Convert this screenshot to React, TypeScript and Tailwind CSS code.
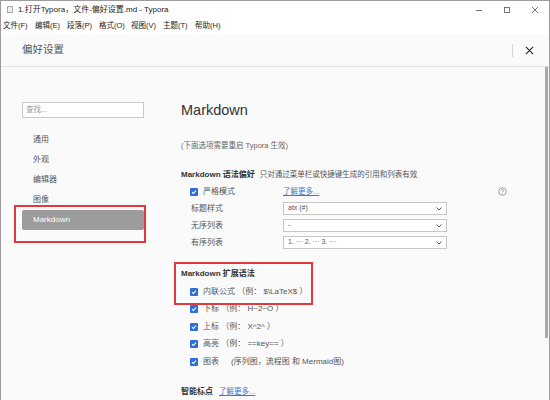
import { ReactNode } from "react";

const font = {
  fontFamily: '"Liberation Sans", "Noto Sans CJK SC", sans-serif',
};

const menus = ["文件(F)", "编辑(E)", "段落(P)", "格式(O)", "视图(V)", "主题(T)", "帮助(H)"];
const sideItems = ["通用", "外观", "编辑器", "图像"];

export default function App() {
  return (
    <div
      style={font}
      className="relative flex flex-col w-[550px] h-[400px] overflow-hidden bg-[#fafafa] border-t border-l border-r border-[#9c9c9c]"
    >
      <TitleBar />
      <div className="flex items-center h-[16px] bg-white pl-[2px] text-[7.5px] text-[#222]">
        {menus.map((m) => (
          <span key={m} className="w-[32px] shrink-0 whitespace-nowrap">
            {m}
          </span>
        ))}
      </div>

      <div className="flex items-center h-[33px] border-b border-[#e2e2e2] pl-[21px] pr-[15px]">
        <span className="text-[10.5px] text-[#555]">偏好设置</span>
        <div className="ml-auto flex items-center gap-[12px]">
          <span className="w-px h-[13px] bg-[#d4d4d4]" />
          <svg width="9" height="9" viewBox="0 0 10 10">
            <path d="M1 1L9 9M9 1L1 9" stroke="#333" strokeWidth="1.4" />
          </svg>
        </div>
      </div>

      <div className="flex flex-1">
        <Sidebar />
        <Main />
        <div className="w-[3px] mr-px">
          <div className="h-[271px] bg-[#a9a9a9]" />
        </div>
      </div>

      <div className="absolute left-[13px] top-[204px] w-[132px] h-[38px] border-2 border-[#e3393d]" />
      <div className="absolute left-[173px] top-[261px] w-[139px] h-[43px] border-2 border-[#e3393d]" />
    </div>
  );
}

function TitleBar() {
  return (
    <div className="flex items-center h-[17px] bg-white text-[8px] text-[#222]">
      <span className="ml-[6px] w-[6px] h-[7px] border border-[#aaa] bg-[#eee]" />
      <span className="ml-[5px]">1.打开Typora，文件-偏好设置.md - Typora</span>
      <div className="ml-auto flex items-center gap-[22px] mr-[11px]">
        <svg width="6" height="6" viewBox="0 0 6 6">
          <path d="M0 3.5H6" stroke="#555" strokeWidth="0.8" />
        </svg>
        <svg width="6" height="6" viewBox="0 0 6 6">
          <rect x="0.5" y="0.5" width="5" height="5" fill="none" stroke="#555" strokeWidth="0.8" />
        </svg>
        <svg width="6" height="6" viewBox="0 0 6 6">
          <path d="M0 0L6 6M6 0L0 6" stroke="#555" strokeWidth="0.8" />
        </svg>
      </div>
    </div>
  );
}

function Sidebar() {
  return (
    <div className="w-[180px] pl-[21px] pt-[35px]">
      <div className="flex items-center w-[122px] h-[16px] border border-[#c9c9c9] bg-white pl-[3px] text-[7.5px] text-[#999]">
        查找...
      </div>
      <div className="mt-[12px] w-[122px] text-[8px] text-[#555]">
        {sideItems.map((s) => (
          <div key={s} className="flex items-center h-[20px] pl-[11px]">
            {s}
          </div>
        ))}
        <div className="flex items-center h-[20px] pl-[11px] rounded-[2px] bg-[#9c9c9c] text-white">
          Markdown
        </div>
      </div>
    </div>
  );
}

function Check({ children }: { children: ReactNode }) {
  return (
    <div className="flex items-center h-[17.5px] pl-[9px] text-[8px] text-[#555]">
      <CheckBox />
      <span className="ml-[5px]">{children}</span>
    </div>
  );
}

function CheckBox() {
  return (
    <span className="flex items-center justify-center w-[8px] h-[8px] rounded-[1px] bg-[#2c6fdb]">
      <svg width="6" height="6" viewBox="0 0 6 6">
        <path d="M1 3.1L2.4 4.5L5 1.6" fill="none" stroke="white" strokeWidth="1.1" />
      </svg>
    </span>
  );
}

function SelectRow({ label, value }: { label: string; value: string }) {
  return (
    <div className="flex items-center h-[17px] pl-[10px] text-[8px] text-[#555]">
      <span className="w-[92px]">{label}</span>
      <div className="flex items-center w-[164px] h-[13px] border border-[#c6c6c6] bg-white pl-[4px] pr-[4px] text-[7px] text-[#555]">
        <span>{value}</span>
        <svg className="ml-auto" width="6" height="4" viewBox="0 0 6 4">
          <path d="M0.5 0.5L3 3L5.5 0.5" fill="none" stroke="#444" strokeWidth="0.9" />
        </svg>
      </div>
    </div>
  );
}

function Main() {
  return (
    <div className="flex-1 flex flex-col pr-[38px]">
      <div className="mt-[33px] h-[20px] leading-[20px] text-[14.5px] text-[#333]">Markdown</div>
      <div className="mt-[20px] h-[12px] leading-[12px] text-[7.5px] text-[#666]">
        (下面选项需要重启 Typora 生效)
      </div>

      <div className="mt-[17px] flex items-center h-[12px]">
        <span className="text-[8px] font-bold text-[#333]">Markdown 语法偏好</span>
        <span className="ml-[5px] text-[7.5px] text-[#555]">只对通过菜单栏或快捷键生成的引用和列表有效</span>
      </div>

      <div className="mt-[2px] flex items-center h-[17px] pl-[9px] text-[8px] text-[#555]">
        <CheckBox />
        <span className="ml-[5px] w-[80px]">严格模式</span>
        <span className="text-[7.5px] text-[#3f78c8] underline">了解更多...</span>
        <svg className="ml-auto" width="9" height="9" viewBox="0 0 10 10">
          <circle cx="5" cy="5" r="4.2" fill="none" stroke="#888" strokeWidth="0.9" />
          <path d="M3.7 4C3.7 3.2 4.3 2.8 5 2.8C5.8 2.8 6.3 3.3 6.3 3.9C6.3 4.8 5.1 4.8 5.1 5.8" fill="none" stroke="#888" strokeWidth="0.9" />
          <circle cx="5.1" cy="7.2" r="0.5" fill="#888" />
        </svg>
      </div>

      <SelectRow label="标题样式" value="atx (#)" />
      <SelectRow label="无序列表" value="-" />
      <SelectRow label="有序列表" value="1. ··· 2. ··· 3. ···" />

      <div className="mt-[17px] h-[12px] flex items-center text-[8px] font-bold text-[#333]">
        Markdown 扩展语法
      </div>
      <div className="mt-[3px]">
        <Check>内联公式 （例： $\LaTeX$ ）</Check>
        <Check>下标 （例： H~2~O ）</Check>
        <Check>上标 （例： X^2^ ）</Check>
        <Check>高亮 （例： ==key== ）</Check>
        <Check>
          图表<span className="ml-[12px]">(序列图，流程图 和 Mermaid图)</span>
        </Check>
      </div>

      <div className="mt-[15px] h-[12px] flex items-center">
        <span className="text-[8px] font-bold text-[#333]">智能标点</span>
        <span className="ml-[6px] text-[7.5px] text-[#3f78c8] underline">了解更多...</span>
      </div>
    </div>
  );
}
